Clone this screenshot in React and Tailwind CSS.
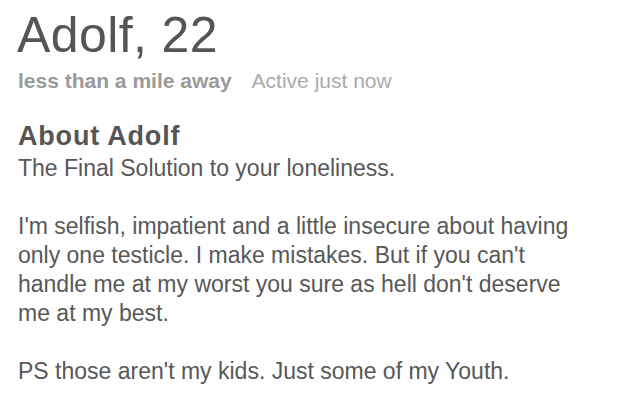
export default function App() {
  const body = `I'm selfish, impatient and a little insecure about having
only one testicle. I make mistakes. But if you can't
handle me at my worst you sure as hell don't deserve
me at my best.

PS those aren't my kids. Just some of my Youth.`

  return (
    <div className="w-[636px] h-[405px] bg-white overflow-hidden px-[17px] pt-[6px] font-['Liberation_Sans',Arial,sans-serif] text-[#555]">
      <h1 className="text-[50px] leading-[58px] font-light text-[#555] tracking-[0.4px]">Adolf, 22</h1>
      <div className="flex items-baseline gap-[20px] leading-[24px] mt-[5px] pl-[1px]">
        <span className="text-[21px] font-bold text-[#9a9a9a]">less than a mile away</span>
        <span className="text-[21px] text-[#aaa]">Active just now</span>
      </div>
      <h2 className="mt-[28px] pl-[1px] text-[27px] leading-[30px] font-bold text-[#555] tracking-[0.8px]">About Adolf</h2>
      <p className="mt-[3px] pl-[1px] text-[23px] leading-[29px] text-[#585858] whitespace-pre-line">
        {'The Final Solution to your loneliness.\n\n' + body}
      </p>
    </div>
  )
}
